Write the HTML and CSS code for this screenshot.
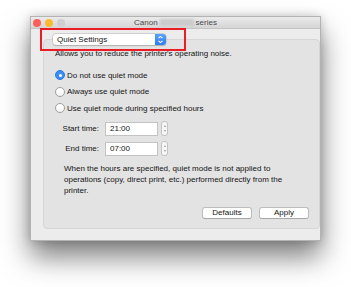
FILE: index.html
```html
<!doctype html>
<html lang="en-us">
<head>
    <title>Canon series - Quiet Settings</title>
    <link rel="stylesheet" href="styles.css">
</head>
<body>
    <div class="window">
        <div class="titlebar">
            <div class="lights">
                <span class="light red"></span>
                <span class="light yellow"></span>
                <span class="light gray"></span>
            </div>
            <div class="title">Canon <span class="blurred"></span> series</div>
            <div></div>
        </div>

        <div class="content">
            <div class="highlight">
                <div class="popup">
                    <span class="popup-label">Quiet Settings</span>
                    <span class="popup-arrows">
                        <svg width="11" height="11" viewBox="0 0 11 11">
                            <path d="M3.5 4.2 L5.5 2.4 L7.5 4.2" fill="none" stroke="#fff" stroke-width="1.1"/>
                            <path d="M3.5 6.8 L5.5 8.6 L7.5 6.8" fill="none" stroke="#fff" stroke-width="1.1"/>
                        </svg>
                    </span>
                </div>
            </div>

            <div class="panel">
                <div class="desc">Allows you to reduce the printer's operating noise.</div>

                <div class="radios">
                    <div class="radio-row"><span class="radio checked"></span>Do not use quiet mode</div>
                    <div class="radio-row"><span class="radio"></span>Always use quiet mode</div>
                    <div class="radio-row"><span class="radio"></span>Use quiet mode during specified hours</div>
                </div>

                <div class="times">
                    <div class="time-row">
                        <span class="time-label">Start time:</span>
                        <span class="time-input">21:00</span>
                        <span class="stepper"><i class="up"></i><i class="down"></i></span>
                    </div>
                    <div class="time-row">
                        <span class="time-label">End time:</span>
                        <span class="time-input">07:00</span>
                        <span class="stepper"><i class="up"></i><i class="down"></i></span>
                    </div>
                </div>

                <div class="note">When the hours are specified, quiet mode is not applied to operations (copy, direct print, etc.) performed directly from the printer.</div>

                <div class="actions">
                    <button class="btn">Defaults</button>
                    <button class="btn">Apply</button>
                </div>
            </div>
        </div>
    </div>
</body>
</html>
```

FILE: styles.css
```css
/* General styles */
html {
    background-color: #ffffff;
}

body {
    margin: 0;
    padding: 16px 0 0 30px;
    min-height: 287px;
    box-sizing: border-box;
    font-family: "Liberation Sans", Arial, sans-serif;
    font-size: 8px;
    color: #141414;
}

.window {
    width: 289px;
    height: 223px;
    background-color: #ececec;
    border: 1px solid #b3b3b3;
    box-shadow: 0 16px 26px 0 rgba(0, 0, 0, 0.5), 0 0 9px rgba(0, 0, 0, 0.18);
}

/* Title bar */
.titlebar {
    height: 11px;
    display: grid;
    grid-template-columns: 1fr auto 1fr;
    align-items: center;
    background: linear-gradient(#ebebeb, #d5d5d5);
    border-bottom: 1px solid #c4c4c4;
}

.lights {
    display: flex;
    gap: 4px;
    padding-left: 2px;
}

.light {
    width: 8px;
    height: 8px;
    border-radius: 50%;
}

.light.red {
    background-color: #fc5f57;
}

.light.yellow {
    background-color: #fdbc2e;
}

.light.gray {
    background-color: #cfcfcf;
}

.title {
    color: #4a4a4a;
    font-size: 8px;
    display: flex;
    align-items: center;
    gap: 2px;
}

.blurred {
    display: inline-block;
    width: 34px;
    height: 7px;
    background-color: #cbcbcb;
    filter: blur(0.8px);
}

/* Content */
.content {
    padding: 0 0 0 9px;
}

.highlight {
    position: relative;
    z-index: 1;
    margin-top: -1px;
    width: 131px;
    height: 19px;
    border: 2px solid #ec1c24;
    display: flex;
    align-items: center;
    padding-left: 11px;
}

.popup {
    width: 113px;
    height: 11px;
    display: flex;
    align-items: center;
    justify-content: space-between;
    background-color: #ffffff;
    border-radius: 3px;
    box-shadow: 0 0 0 0.5px #b8b8b8, 0 0.5px 1px rgba(0, 0, 0, 0.25);
}

.popup-label {
    padding-left: 4px;
    color: #141414;
}

.popup-arrows {
    width: 11px;
    height: 11px;
    border-radius: 0 3px 3px 0;
    background: linear-gradient(#5aa2f7, #2f7cf0);
    display: flex;
}

.panel {
    margin: -12px 0 0 3px;
    width: 264px;
    height: 188px;
    background-color: #e3e3e3;
    border: 1px solid #d6d6d6;
    border-radius: 4px;
    padding: 0 0 0 11px;
    box-sizing: content-box;
}

.desc {
    margin-top: 9px;
    line-height: 10px;
}

.radios {
    margin-top: 8px;
}

.radio-row {
    height: 16.6px;
    display: flex;
    align-items: center;
    gap: 2px;
}

.radio {
    width: 8px;
    height: 8px;
    border-radius: 50%;
    background: linear-gradient(#ffffff, #f4f4f4);
    border: 0.5px solid #9e9e9e;
    box-sizing: content-box;
}

.radio.checked {
    background: #3b8cf5;
    border-color: #2d78e0;
    position: relative;
}

.radio.checked::after {
    content: "";
    position: absolute;
    left: 2.5px;
    top: 2.5px;
    width: 3px;
    height: 3px;
    border-radius: 50%;
    background-color: #ffffff;
}

/* Time rows */
.times {
    margin-top: 2px;
}

.time-row {
    height: 20px;
    display: flex;
    align-items: center;
}

.time-label {
    width: 44px;
    text-align: right;
    margin-right: 6px;
}

.time-input {
    width: 47px;
    height: 12px;
    line-height: 12px;
    padding-left: 4px;
    background-color: #ffffff;
    border: 0.5px solid #c3c3c3;
}

.stepper {
    margin-left: 3px;
    width: 5px;
    height: 13px;
    border: 0.5px solid #c2c2c2;
    border-radius: 3px;
    background-color: #f7f7f7;
    display: flex;
    flex-direction: column;
    align-items: center;
    justify-content: center;
    gap: 3px;
}

.stepper i {
    width: 0;
    height: 0;
    border-left: 1.5px solid transparent;
    border-right: 1.5px solid transparent;
}

.stepper .up {
    border-bottom: 2px solid #9a9a9a;
}

.stepper .down {
    border-top: 2px solid #9a9a9a;
}

.note {
    margin: 4px 0 0 9px;
    width: 225px;
    line-height: 11px;
}

.actions {
    margin-top: 11px;
    padding-right: 10px;
    display: flex;
    justify-content: flex-end;
    gap: 7px;
}

.btn {
    width: 50px;
    height: 12px;
    padding: 0;
    font-family: "Liberation Sans", Arial, sans-serif;
    font-size: 8px;
    color: #141414;
    background-color: #ffffff;
    border: 0.5px solid #bdbdbd;
    border-bottom-color: #a8a8a8;
    border-radius: 3px;
}
```
